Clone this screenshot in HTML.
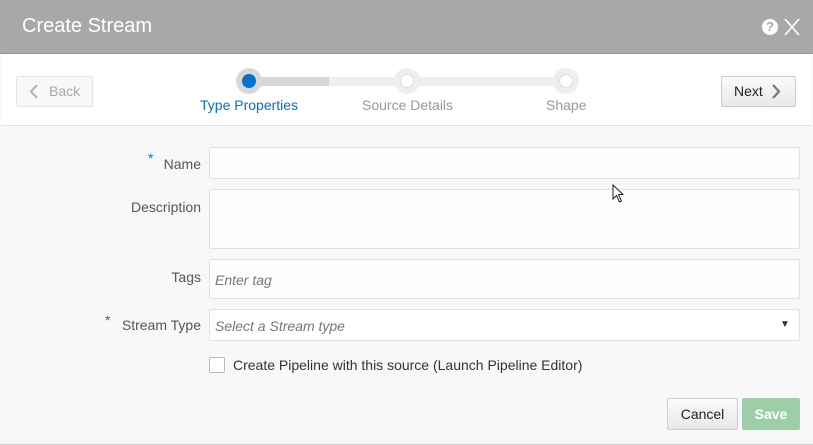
<!DOCTYPE html>
<html><head><style>
*{box-sizing:border-box;margin:0;padding:0}
body{width:813px;height:445px;overflow:hidden;font-family:"Liberation Sans",sans-serif;background:#f8f8f8;position:relative}
.a{position:absolute}
.hdr{left:0;top:0;width:813px;height:54px;background:#a8a8a8;border-bottom:1px solid #999}
.lbl{font-size:14px;color:#555;text-align:right;width:200px}
.f{background:#fcfdfe;border:1px solid #dfe1e4;border-radius:2px;left:209px;width:591px}
.ph{font-style:italic;color:#777;font-size:14px}
.star{color:#0572ce;font-size:14px}
</style></head><body>
<div class="a hdr"></div>
<div class="a" style="left:22px;top:15px;font-size:20px;color:#fff">Create Stream</div>
<div class="a" style="left:762px;top:19px;width:16px;height:16px;border-radius:50%;background:#fff;color:#a8a8a8;font-size:13px;font-weight:bold;text-align:center;line-height:16px">?</div>
<svg class="a" style="left:783px;top:17px" width="18" height="20"><path d="M2 2L16 18M16 2L2 18" stroke="#fff" stroke-width="1.6"/></svg>
<div class="a" style="left:1px;top:55px;width:811px;height:71px;background:#fff;border-bottom:1px solid #dfe3e8"></div>
<div class="a" style="left:16px;top:76px;width:77px;height:31px;border:1px solid #e3e5e7;background:#f7f8f9;border-radius:2px;color:#aaa;font-size:14px;line-height:29px;padding-left:32px">Back</div>
<svg class="a" style="left:29px;top:84px" width="10" height="15"><path d="M8 1L2 7.5L8 14" stroke="#b5b5b5" stroke-width="2.2" fill="none"/></svg>
<div class="a" style="left:721px;top:76px;width:75px;height:31px;border:1px solid #c4ced7;background:linear-gradient(#fafafa,#e8e9ea);border-radius:2px;color:#222;font-size:14px;line-height:29px;padding-left:12px">Next</div>
<svg class="a" style="left:771px;top:84px" width="10" height="15"><path d="M2 1L8 7.5L2 14" stroke="#777" stroke-width="2.2" fill="none"/></svg>
<div class="a" style="left:249px;top:77px;width:317px;height:9px;background:#eee"></div>
<div class="a" style="left:249px;top:77px;width:80px;height:9px;background:#d6d6d6"></div>
<div class="a" style="left:236px;top:68px;width:26px;height:26px;border-radius:50%;background:#d8d8d8"></div>
<div class="a" style="left:242px;top:74px;width:14px;height:14px;border-radius:50%;background:#0572ce"></div>
<div class="a" style="left:394px;top:68px;width:26px;height:26px;border-radius:50%;background:#eee"></div>
<div class="a" style="left:400px;top:74px;width:14px;height:14px;border-radius:50%;background:#fff;border:1px solid #ddd"></div>
<div class="a" style="left:553px;top:68px;width:26px;height:26px;border-radius:50%;background:#eee"></div>
<div class="a" style="left:559px;top:74px;width:14px;height:14px;border-radius:50%;background:#fff;border:1px solid #ddd"></div>
<div class="a" style="left:200px;top:97px;font-size:14px;color:#0a6ebd">Type Properties</div>
<div class="a" style="left:362px;top:97px;font-size:14px;color:#999">Source Details</div>
<div class="a" style="left:546px;top:97px;font-size:14px;color:#999">Shape</div>

<div class="a star" style="left:148px;top:150px">*</div>
<div class="a lbl" style="left:1px;top:156px">Name</div>
<div class="a f" style="top:147px;height:32px"></div>
<div class="a lbl" style="left:1px;top:199px">Description</div>
<div class="a f" style="top:189px;height:60px"></div>
<svg class="a" style="left:612px;top:184px;z-index:5" width="14" height="20"><path d="M1 1L1 15L4.5 11.5L7.5 18L9.5 17L6.5 10.5L11 10.5Z" fill="#fff" stroke="#222" stroke-width="1"/></svg>
<div class="a lbl" style="left:1px;top:269px">Tags</div>
<div class="a f" style="top:259px;height:40px"></div>
<div class="a ph" style="left:215px;top:272px">Enter tag</div>
<div class="a star" style="left:105px;top:312px">*</div>
<div class="a lbl" style="left:1px;top:317px">Stream Type</div>
<div class="a f" style="top:309px;height:32px;background:#fff"></div>
<div class="a ph" style="left:215px;top:318px">Select a Stream type</div>
<div class="a" style="left:780px;top:319px;font-size:10px;color:#333">▼</div>
<div class="a" style="left:209px;top:357px;width:16px;height:16px;border:1px solid #bbb;background:#fff;border-radius:2px"></div>
<div class="a" style="left:233px;top:357px;font-size:14px;color:#333">Create Pipeline with this source (Launch Pipeline Editor)</div>
<div class="a" style="left:667px;top:398px;width:71px;height:32px;border:1px solid #c4ced7;background:linear-gradient(#fafafa,#e8e9ea);border-radius:2px;font-size:14px;color:#222;text-align:center;line-height:30px">Cancel</div>
<div class="a" style="left:742px;top:398px;width:58px;height:32px;background:#9ccfa7;border-radius:2px;font-size:14px;color:#fff;text-align:center;line-height:32px;font-weight:bold">Save</div>
<div class="a" style="left:0;top:444px;width:813px;height:1px;background:#c9ced3"></div>
</body></html>
